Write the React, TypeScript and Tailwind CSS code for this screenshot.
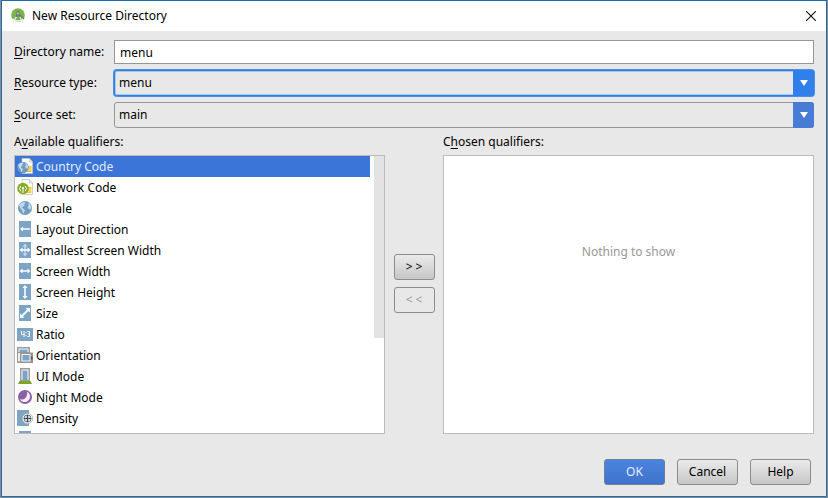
import { useState, type ReactNode } from "react";

const BLUE = "#7ba4c7";

function Mnemonic({ children }: { children: ReactNode }) {
  return <span className="underline underline-offset-2">{children}</span>;
}

/* Icons */

function Svg({ children }: { children?: ReactNode }) {
  return (
    <svg viewBox="0 0 16 16" className="mt-0.5 size-4 shrink-0" aria-hidden="true">
      {children}
    </svg>
  );
}

function Page() {
  return (
    <>
      <path d="M5 .5h7.500l3 3.500v11.500H5z" fill="#fff" stroke="#c3c3bb" strokeWidth=".8" />
      <path d="M12.500.5V4h3" fill="#e4e4de" stroke="#c3c3bb" strokeWidth=".7" />
      <path d="M10 8h4.500v6H10z" fill="#f4c534" />
      <path d="M10 10h4.500M10 12h4.500" stroke="#fff0a8" strokeWidth=".7" />
    </>
  );
}

function Globe({ cx, cy, r }: { cx: number; cy: number; r: number }) {
  const k = r / 7;
  return (
    <g transform={`translate(${cx - r} ${cy - r}) scale(${k})`}>
      <circle cx="7" cy="7" r="7" fill="#6e9cc2" />
      <path
        d="M1 4C2.500 2 4.500 1 7 1L7.500 2.200 6 3l.8 1.200L5 5.500 4.200 6.800 6 8l1 1.400-.8 1.600-.7 1.500-.9-.8-.4-2.500L2.500 7.500z"
        fill="#c3d9ea"
      />
      <path d="M9.500 2.500l2-.3 1.500 2.500.2 2.500-1.100 1.800-1.200-1.300-1.300-1 .2-1.800 1.100-.6z" fill="#bfd5e7" />
    </g>
  );
}

function Screen() {
  return <path d="M2 0h12v16H2z" fill={BLUE} />;
}

function CountryIcon() {
  return (
    <Svg>
      <Page />
      <Globe cx={6} cy={9.5} r={5.8} />
    </Svg>
  );
}

function NetworkIcon() {
  return (
    <Svg>
      <Page />
      <circle cx="6" cy="9.500" r="5.800" fill="#86ab2c" />
      <path
        d="M3.800 12.200a3.700 3.700 0 0 1 0-5.200M8.200 12.200a3.700 3.700 0 0 0 0-5.200M6 9v5"
        fill="none"
        stroke="#fff"
        strokeWidth="1"
      />
      <circle cx="6" cy="9" r="1.100" fill="#fff" />
    </Svg>
  );
}

function LocaleIcon() {
  return (
    <Svg>
      <Globe cx={8} cy={8} r={7} />
    </Svg>
  );
}

function DirectionIcon() {
  return (
    <Svg>
      <Screen />
      <path d="M3 8l3-2.500v1.700h7v1.600H6v1.700z" fill="#fff" />
    </Svg>
  );
}

function SmallestIcon() {
  return (
    <Svg>
      <Screen />
      <path d="M8 1.500l2.500 3H8.800v7h1.700L8 14.500l-2.500-3h1.700v-7H5.500z" fill="#c4d8e8" />
      <path d="M2.500 8l3-2.500v1.700h5V5.500l3 2.500-3 2.500V8.800h-5v1.700z" fill="#fff" />
    </Svg>
  );
}

function WidthIcon() {
  return (
    <Svg>
      <Screen />
      <path d="M2.500 8l3-2.500v1.700h5V5.500l3 2.500-3 2.500V8.800h-5v1.700z" fill="#fff" />
    </Svg>
  );
}

function HeightIcon() {
  return (
    <Svg>
      <Screen />
      <path d="M8 1l2.500 3H8.800v8h1.700L8 15l-2.500-3h1.700V4H5.500z" fill="#fff" />
    </Svg>
  );
}

function SizeIcon() {
  return (
    <Svg>
      <Screen />
      <path d="M8.500 3H13v4.500l-1.600-1.600-5.500 5.500L7.500 13H3V8.500l1.600 1.600 5.500-5.500z" fill="#fff" />
    </Svg>
  );
}

function RatioIcon() {
  return (
    <Svg>
      <path d="M0 2h16v13H0z" fill={BLUE} />
      <path
        d="M4.500 5v3.500h3M7 5v6M10.500 5.500H12.500v5h-2M11 8h1.500"
        fill="none"
        stroke="#fff"
        strokeWidth="1"
      />
      <path d="M8.500 6h1v1h-1zM8.500 9h1v1h-1z" fill="#fff" />
    </Svg>
  );
}

function OrientationIcon() {
  return (
    <Svg>
      <path d="M0 0h13v6H2v10H0z" fill="#9b9b9b" />
      <path d="M1.500 1.500h10V5h-10z" fill="#f4f4f4" />
      <path d="M2.500 2.500h8V5h-8z" fill={BLUE} />
      <path d="M1 6h2v8H1z" fill="#eee" />
      <path d="M3.700 6.200h11.600v9.100H3.700z" fill="#f4f4f4" stroke="#959595" strokeWidth="1.400" />
      <path d="M5.500 8h7v5.500h-7z" fill={BLUE} />
      <path d="M13.500 6h2.500v10h-2.500z" fill="#959595" />
      <path d="M14.200 9.500h1.200v3h-1.200z" fill="#444" />
      <path d="M0 14.500h4V16H0z" fill="#9b9b9b" />
    </Svg>
  );
}

function UiModeIcon() {
  return (
    <Svg>
      <path d="M3.700.7h8.600v12H3.700z" fill="#f4f4f4" stroke="#9b9b9b" strokeWidth="1.400" />
      <path d="M5.500 2.500h5V12h-5z" fill={BLUE} />
      <path d="M2.500 13h11l1.500 3H1z" fill="#7fa61c" />
    </Svg>
  );
}

function NightIcon() {
  return (
    <Svg>
      <circle cx="8" cy="8" r="7" fill="#8a62a3" />
      <path d="M10.200 2.500a5.600 5.600 0 1 1-7.700 7.500c3 1.700 8.200-.5 7.700-7.500z" fill="#f5eff8" />
    </Svg>
  );
}

function DensityIcon() {
  return (
    <Svg>
      <path d="M0 0h12v16H0z" fill={BLUE} />
      <circle cx="10.500" cy="8.500" r="5.200" fill="#fff" stroke="#aaa" strokeWidth=".8" />
      <circle cx="10.500" cy="8.500" r="3.600" fill="#dde5eb" stroke="#666" strokeWidth=".9" />
      <path d="M10.500 5v7M7 8.500h7" stroke="#3c4650" strokeWidth="1.200" />
    </Svg>
  );
}

function StudioIcon() {
  return (
    <svg viewBox="0 0 16 16" className="size-4 shrink-0" aria-hidden="true">
      <circle cx="8" cy="7" r="6.800" fill="#7cb450" />
      <path d="M8.500 5l6 5A6.800 6.800 0 0 1 9 13.700z" fill="#659a3e" />
      <path d="M3 11c1.500 1.500 3.200 2 5 2s3.500-.5 5-2" fill="none" stroke="#e9efe4" strokeWidth="1.300" />
      <path d="M6.500 8.500L2.800 15M9.500 8.500l3.700 6.500" stroke="#e9ece6" strokeWidth="1.400" />
      <path d="M8 2.300l1.300 2 1.200 4.700H9L8 7 7 9H5.500l1.200-4.700z" fill="#6f7a76" />
      <circle cx="8" cy="5.500" r=".9" fill="#c9d4c4" />
    </svg>
  );
}

const QUALIFIERS = [
  { name: "Country Code", Icon: CountryIcon },
  { name: "Network Code", Icon: NetworkIcon },
  { name: "Locale", Icon: LocaleIcon },
  { name: "Layout Direction", Icon: DirectionIcon },
  { name: "Smallest Screen Width", Icon: SmallestIcon },
  { name: "Screen Width", Icon: WidthIcon },
  { name: "Screen Height", Icon: HeightIcon },
  { name: "Size", Icon: SizeIcon },
  { name: "Ratio", Icon: RatioIcon },
  { name: "Orientation", Icon: OrientationIcon },
  { name: "UI Mode", Icon: UiModeIcon },
  { name: "Night Mode", Icon: NightIcon },
  { name: "Density", Icon: DensityIcon },
];

/* Form controls */

function ComboBox({ id, value, focused }: { id: string; value: string; focused?: boolean }) {
  return (
    <div className="relative">
      <select
        id={id}
        defaultValue={value}
        className={`block h-[26px] w-full appearance-none rounded-[3px] border pl-1 pr-6 outline-none ${
          focused
            ? "border-[#2f7fe0] bg-[#e8e8e8] ring-1 ring-[#4a90e8] inset-ring-1 inset-ring-[#a9c8ee]"
            : "border-[#969696] bg-[#e8e8e8]"
        }`}
      >
        <option>{value}</option>
      </select>
      <span
        className={`pointer-events-none absolute inset-y-0 right-0 flex w-[21px] items-center justify-center rounded-r-[3px] ${
          focused ? "bg-[#2f80ea]" : "bg-[#487bd6]"
        }`}
      >
        <svg viewBox="0 0 8 6" className="h-1.5 w-2" aria-hidden="true">
          <path d="M0 0h8L4 6z" fill="#fff" />
        </svg>
      </span>
    </div>
  );
}

function DialogButton({ children, primary }: { children: ReactNode; primary?: boolean }) {
  return (
    <button
      type="button"
      className={`h-[26px] w-[61px] rounded-[3px] border bg-linear-to-b ${
        primary
          ? "border-[#6c7d9c] from-[#4a84e0] to-[#4073cb] text-[#e4ecfa]"
          : "border-[#8c8c8c] from-[#ebebeb] to-[#c6c6c6]"
      }`}
    >
      {children}
    </button>
  );
}

export default function App() {
  const [selected, setSelected] = useState("Country Code");

  return (
    <div className="h-screen border-x border-b border-[#8f8a86] font-['Noto_Sans',sans-serif] text-xs leading-4 text-black">
      <div className="flex h-full flex-col border border-[#1a6fb4] bg-[#e8e8e8]">
        {/* Title bar */}
        <header className="flex h-[30px] shrink-0 items-center gap-1.5 bg-white pl-2 pr-2.5">
          <StudioIcon />
          <h1>New Resource Directory</h1>
          <button type="button" aria-label="Close" className="ml-auto">
            <svg viewBox="0 0 10 10" className="size-2.5" aria-hidden="true">
              <path d="M0 0l10 10M10 0L0 10" stroke="#111" strokeWidth="1.100" />
            </svg>
          </button>
        </header>

        <main className="flex min-h-0 flex-1 flex-col px-3 pb-[11px] pt-[9px]">
          <div className="grid grid-cols-[100px_1fr] items-center gap-y-1.5">
            <label htmlFor="directory">
              <Mnemonic>D</Mnemonic>irectory name:
            </label>
            <input
              id="directory"
              defaultValue="menu"
              className="h-6 border border-[#969696] bg-white px-[5px] outline-none"
            />
            <label htmlFor="type">
              <Mnemonic>R</Mnemonic>esource type:
            </label>
            <ComboBox id="type" value="menu" focused />
            <label htmlFor="source">
              <Mnemonic>S</Mnemonic>ource set:
            </label>
            <ComboBox id="source" value="main" />
          </div>

          {/* Qualifier lists */}
          <div className="grid min-h-0 flex-1 grid-cols-[1fr_58px_1fr] grid-rows-[27px_minmax(0,1fr)]">
            <h2 id="available" className="self-center">
              A<Mnemonic>v</Mnemonic>ailable qualifiers:
            </h2>
            <h2 id="chosen" className="col-start-3 self-center">
              C<Mnemonic>h</Mnemonic>osen qualifiers:
            </h2>

            <div className="flex gap-1 overflow-hidden border border-[#bcbcbc] bg-white">
              <ul role="listbox" aria-labelledby="available" className="flex-1">
                {QUALIFIERS.map(({ name, Icon }) => (
                  <li
                    key={name}
                    role="option"
                    aria-selected={name === selected}
                    onClick={() => setSelected(name)}
                    className={`flex h-[21px] gap-0.5 pl-0.5 leading-[21px] ${
                      name === selected ? "bg-[#3a75d7] text-[#e4ecfa]" : ""
                    }`}
                  >
                    <Icon />
                    <span className="pl-px">{name}</span>
                  </li>
                ))}
                <li className="h-[21px] pl-0.5">
                  <Svg>
                    <Screen />
                  </Svg>
                </li>
              </ul>
              <div className="h-[182px] w-2.5 bg-[#e3e3e3]" />
            </div>

            <div className="flex flex-col items-center justify-center gap-[7px] pb-[22px]">
              <button
                type="button"
                aria-label="Add qualifier"
                className="flex h-[26px] w-[41px] items-center justify-center gap-[3px] rounded-[3px] border border-[#8c8c8c] bg-linear-to-b from-[#ebebeb] to-[#c6c6c6]"
              >
                <span>&gt;</span>
                <span>&gt;</span>
              </button>
              <button
                type="button"
                aria-label="Remove qualifier"
                disabled
                className="flex h-[26px] w-[41px] items-center justify-center gap-[3px] rounded-[3px] border border-[#8c8c8c] text-[#999]"
              >
                <span>&lt;</span>
                <span>&lt;</span>
              </button>
            </div>

            <div
              aria-labelledby="chosen"
              className="border border-[#bcbcbc] bg-white pt-[88px] text-center text-[#999]"
            >
              Nothing to show
            </div>
          </div>

          <footer className="mt-[25px] flex justify-end gap-3 pr-[3px]">
            <DialogButton primary>OK</DialogButton>
            <DialogButton>Cancel</DialogButton>
            <DialogButton>Help</DialogButton>
          </footer>
        </main>
      </div>
    </div>
  );
}
